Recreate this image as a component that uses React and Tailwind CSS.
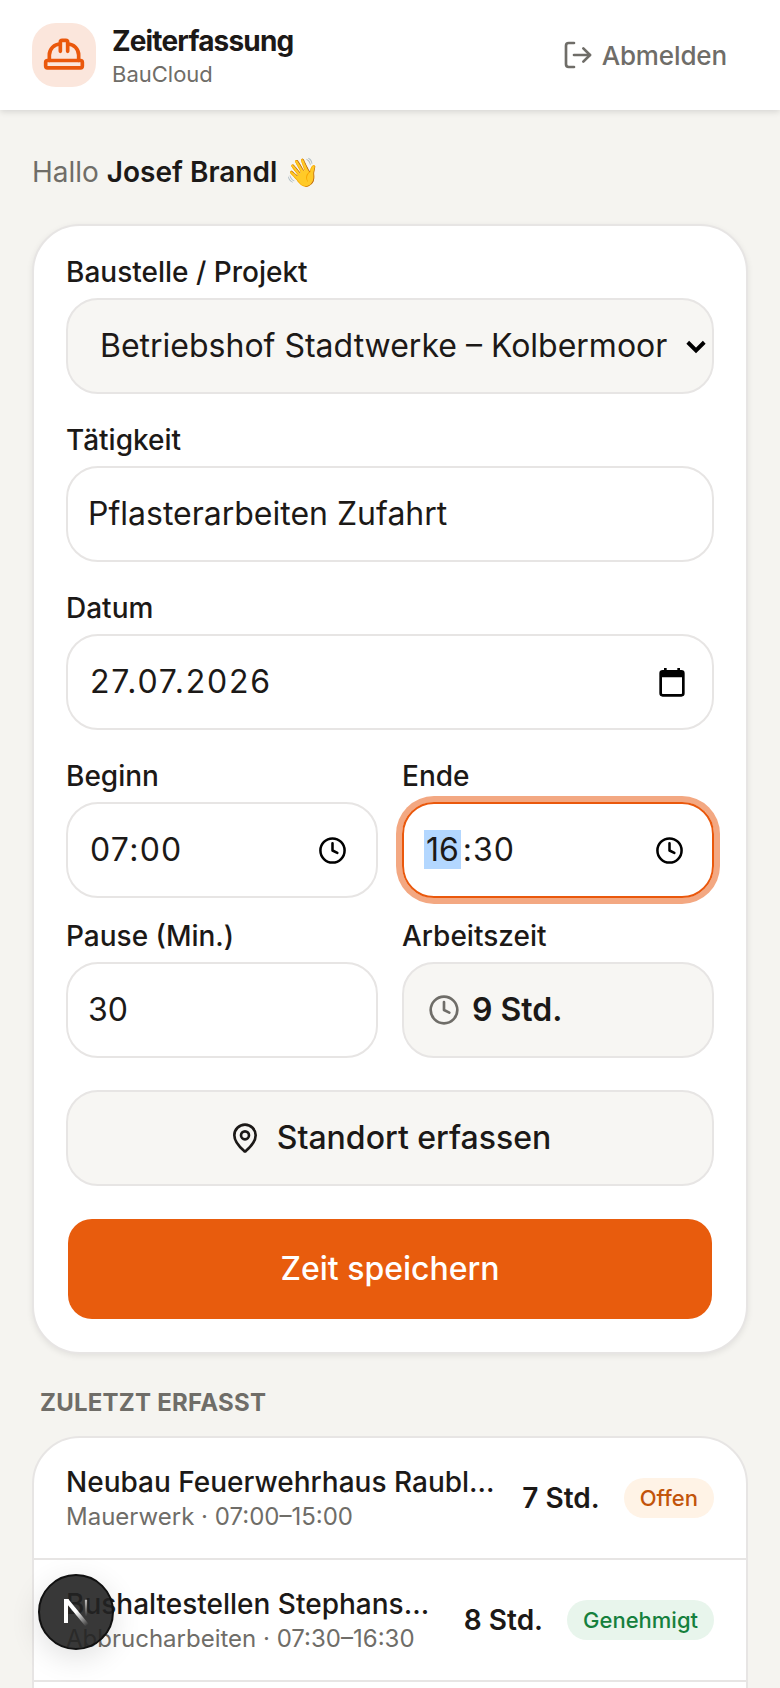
import { Clock, HardHat, LogOut, MapPin } from 'lucide-react';

function Label({ children }) {
    return <div className="mb-2 h-10 text-[28px] leading-[44px] font-medium text-[#1c1917]">{children}</div>;
}

function ClockIcon() {
    return <Clock className="h-[29px] w-[29px] text-black" strokeWidth={2.1} />;
}

function CalendarIcon() {
    return (
        <svg viewBox="0 0 24 24" className="h-8 w-8" fill="black">
            <path d="M5 3h1V1.5h2V3h8V1.5h2V3h1a2.5 2.5 0 0 1 2.5 2.5v15A2.5 2.5 0 0 1 19 23H5a2.5 2.5 0 0 1-2.5-2.5v-15A2.5 2.5 0 0 1 5 3Zm-.5 5.5v12c0 .3.2.5.5.5h14c.3 0 .5-.2.5-.5v-12h-15Z" />
        </svg>
    );
}

function RecentRow({ title, sub, hours, status, statusClass }) {
    return (
        <div className="flex h-[122px] items-center border-b-2 border-[#e7e5e4] px-8">
            <div className="min-w-0 flex-1">
                <div className="truncate text-[28px] leading-[38px] font-medium text-[#1c1917]">{title}</div>
                <div className="truncate text-2xl leading-8 text-[#6f6d68]">{sub}</div>
            </div>
            <div className="ml-6 shrink-0 text-[28px] font-semibold text-[#1c1917]">{hours}</div>
            <div className={`ml-6 flex h-10 shrink-0 items-center rounded-full px-4 text-[22px] font-medium ${statusClass}`}>
                {status}
            </div>
        </div>
    );
}

export default function App() {
    return (
        <div className="relative h-[1688px] overflow-hidden bg-[#f5f4f0] font-['Inter',sans-serif] text-[#1c1917]">
            {/* Header */}
            <header className="flex h-[110px] items-center justify-between bg-white px-8 shadow-[0_2px_6px_rgba(0,0,0,0.12)]">
                <div className="flex items-center gap-4">
                    <div className="flex h-16 w-16 items-center justify-center rounded-3xl bg-[#fbe6dc]">
                        <HardHat className="h-11 w-11 text-[#ea580c]" strokeWidth={2} />
                    </div>
                    <div className="pt-[2px]">
                        <div className="text-[28px] leading-9 font-bold tracking-[-0.03em]">Zeiterfassung</div>
                        <div className="text-[22px] leading-[30px] text-[#6f6d68]">BauCloud</div>
                    </div>
                </div>
                <div className="flex items-center gap-2 pr-[21px] text-[26px] font-medium tracking-[-0.005em] text-[#6f6d68]">
                    <LogOut className="h-8 w-8" strokeWidth={2} />
                    Abmelden
                </div>
            </header>

            <main className="px-8">
                <p className="mt-10 h-11 text-[28px] leading-11 text-[#6f6d68]">
                    Hallo <span className="font-semibold text-[#1c1917]">Josef Brandl</span> 👋
                </p>

                {/* Form card */}
                <div className="mt-[30px] rounded-[48px] border-2 border-[#e7e5e4] bg-white px-8 pt-6 pb-[33px] shadow-[0_2px_6px_rgba(0,0,0,0.08)]">
                    <Label>Baustelle / Projekt</Label>
                    <div className="flex h-24 items-center rounded-[32px] border-2 border-[#e7e5e4] bg-[#f7f6f3] pr-1 pl-[32px] text-[32px]">
                        <span className="flex-1 truncate">Betriebshof Stadtwerke – Kolbermoor</span>
                        <svg viewBox="0 0 16 16" className="h-6 w-6" fill="none" stroke="black" strokeWidth="2.6">
                            <path d="M2.5 5.5L8 11l5.5-5.5" />
                        </svg>
                    </div>

                    <div className="mt-6">
                        <Label>Tätigkeit</Label>
                        <div className="flex h-24 items-center rounded-[32px] border-2 border-[#e7e5e4] px-5 text-[32px]">
                            Pflasterarbeiten Zufahrt
                        </div>
                    </div>

                    <div className="mt-6">
                        <Label>Datum</Label>
                        <div className="flex h-24 items-center justify-between rounded-[32px] border-2 border-[#e7e5e4] pr-6 pl-[22px] text-[32px] tracking-[0.056em]">
                            27.07.2026
                            <CalendarIcon />
                        </div>
                    </div>

                    <div className="mt-6 grid grid-cols-2 gap-x-6 gap-y-4">
                        <div>
                            <Label>Beginn</Label>
                            <div className="flex h-24 items-center justify-between rounded-[32px] border-2 border-[#e7e5e4] pr-[29px] pl-[22px] text-[32px] tracking-[0.04em]">
                                07:00
                                <ClockIcon />
                            </div>
                        </div>
                        <div>
                            <Label>Ende</Label>
                            <div className="flex h-24 items-center justify-between rounded-[32px] border-2 border-[#ea580c] pr-[28px] pl-5 text-[32px] tracking-[0.03em] shadow-[0_0_0_6px_#f3a882]">
                                <span>
                                    <span className="bg-[#b3d7ff] px-[2px] tracking-normal">16</span>
                                    <span className="ml-[2px]">:30</span>
                                </span>
                                <ClockIcon />
                            </div>
                        </div>
                        <div>
                            <Label>Pause (Min.)</Label>
                            <div className="flex h-24 items-center rounded-[32px] border-2 border-[#e7e5e4] px-5 text-[32px]">30</div>
                        </div>
                        <div>
                            <Label>Arbeitszeit</Label>
                            <div className="flex h-24 items-center gap-3 rounded-[32px] border-2 border-[#e7e5e4] bg-[#f7f6f3] px-6 text-[32px] font-semibold">
                                <Clock className="h-8 w-8 text-[#6f6d68]" strokeWidth={2} />
                                9 Std.
                            </div>
                        </div>
                    </div>

                    <div className="mt-8 flex h-24 items-center justify-center gap-4 rounded-[32px] border-2 border-[#e7e5e4] bg-[#f7f6f3] text-[32px] font-medium">
                        <MapPin className="h-8 w-8" strokeWidth={2} />
                        Standort erfassen
                    </div>

                    <div className="mx-[2px] mt-[33px] flex h-[100px] items-center justify-center rounded-[24px] bg-[#e85c0d] text-[32px] font-medium text-white">
                        Zeit speichern
                    </div>
                </div>

                {/* Recent entries */}
                <h2 className="mt-[33px] ml-2 text-2xl leading-8 font-bold tracking-[0.01em] text-[#6f6d68]">ZULETZT ERFASST</h2>
                <div className="mt-[17px] rounded-t-[48px] border-2 border-[#e7e5e4] bg-white">
                    <RecentRow
                        title="Neubau Feuerwehrhaus Raubling"
                        sub="Mauerwerk · 07:00–15:00"
                        hours="7 Std."
                        status="Offen"
                        statusClass="bg-[#fff3e6] text-[#c2540a]"
                    />
                    <RecentRow
                        title="Bushaltestellen Stephanskirchen"
                        sub="Abbrucharbeiten · 07:30–16:30"
                        hours="8 Std."
                        status="Genehmigt"
                        statusClass="bg-[#e8f5ec] text-[#15803d]"
                    />
                    <div className="h-[120px]" />
                </div>
            </main>

            {/* Next.js dev indicator */}
            <div className="absolute top-[1574px] left-[38px] flex h-[76px] w-[76px] items-center justify-center rounded-full border-2 border-[#111] bg-[#222]/90 shadow-[0_8px_30px_rgba(0,0,0,0.12)]">
                <svg viewBox="0 0 36 36" className="h-10 w-10" fill="none">
                    <defs>
                        <linearGradient id="nextFade" x1="10" y1="8" x2="28" y2="30" gradientUnits="userSpaceOnUse">
                            <stop offset="0.45" stopColor="white" />
                            <stop offset="1" stopColor="white" stopOpacity="0" />
                        </linearGradient>
                        <linearGradient id="nextStem" x1="27" y1="7" x2="27" y2="22" gradientUnits="userSpaceOnUse">
                            <stop offset="0" stopColor="white" stopOpacity="0.7" />
                            <stop offset="1" stopColor="white" stopOpacity="0" />
                        </linearGradient>
                    </defs>
                    <path d="M9 28V8h2.5" stroke="white" strokeWidth="3.6" />
                    <path d="M10 8l18 22" stroke="url(#nextFade)" strokeWidth="3.6" />
                    <path d="M27 7v15" stroke="url(#nextStem)" strokeWidth="2" />
                </svg>
            </div>
        </div>
    );
}
